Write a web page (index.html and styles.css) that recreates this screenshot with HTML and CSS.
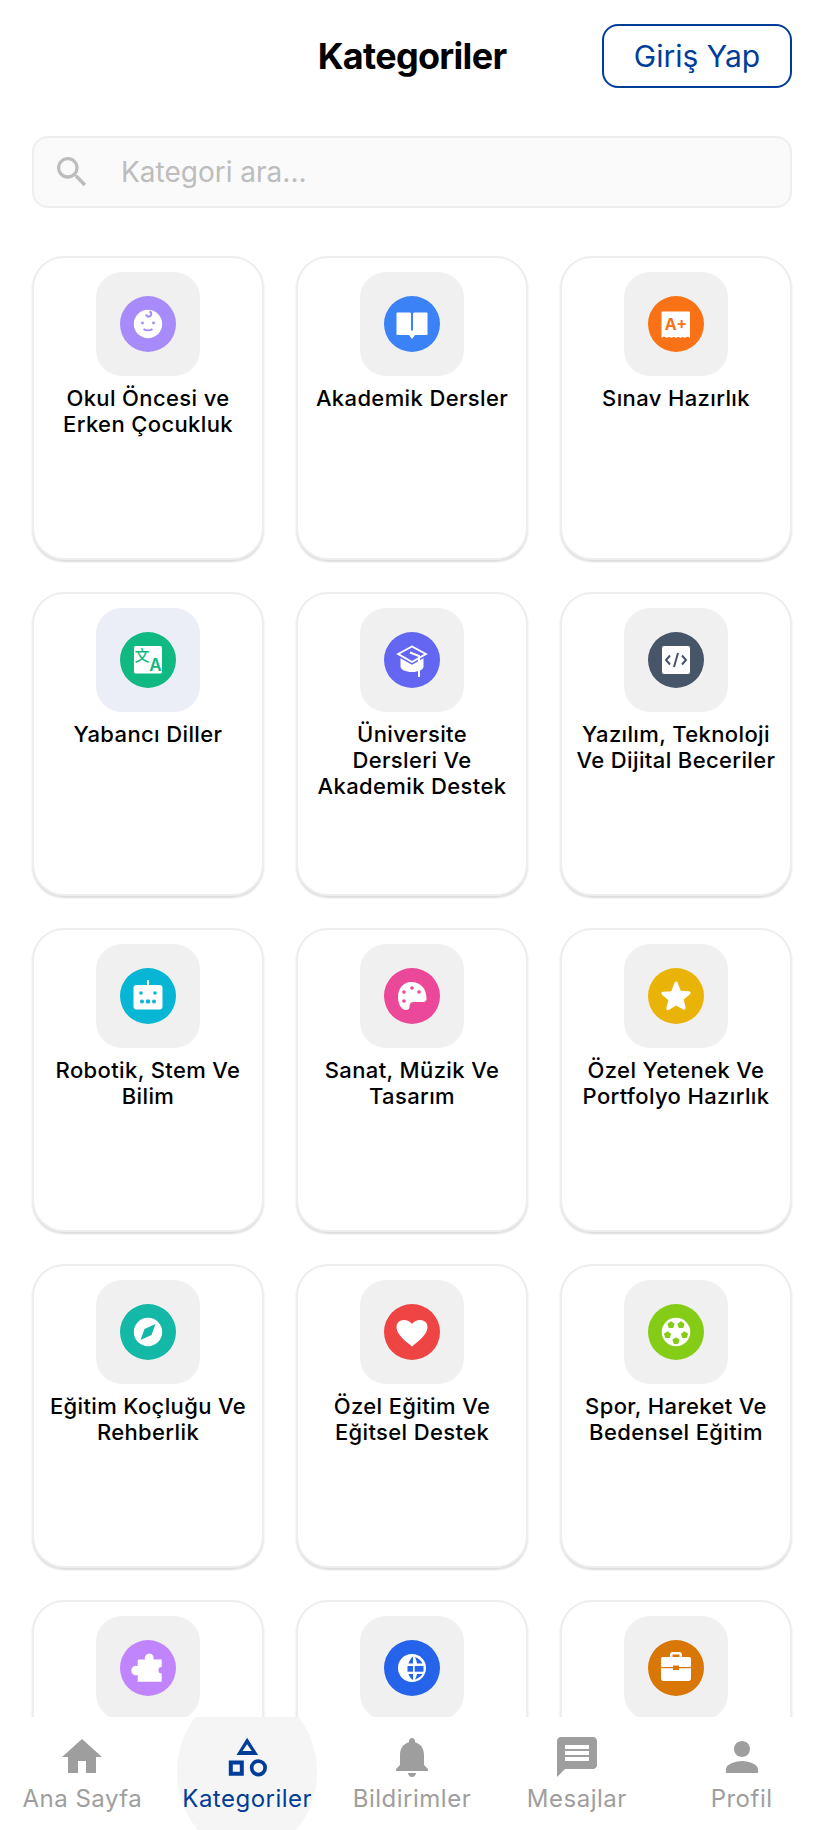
FILE: index.html
```html
<!DOCTYPE html>
<html lang="tr">

<head>
    <meta charset="UTF-8">
    <meta name="viewport" content="width=device-width, initial-scale=1.0">
    <title>Kategoriler</title>
    <link rel="stylesheet" href="styles.css">
</head>

<body>
    <div class="screen">
        <div class="content">
            <div class="header">
                <h1 class="title">Kategoriler</h1>
                <button class="login">Giriş Yap</button>
            </div>

            <div class="search">
                <svg class="search-icon" viewBox="0 0 24 24"><path d="M15.5 14h-.79l-.28-.27A6.47 6.47 0 0 0 16 9.5 6.5 6.5 0 1 0 9.5 16c1.61 0 3.09-.59 4.23-1.57l.27.28v.79l5 4.99L20.49 19l-4.99-5zm-6 0C7.01 14 5 11.99 5 9.5S7.01 5 9.5 5 14 7.01 14 9.5 11.99 14 9.5 14z"/></svg>
                <span class="placeholder">Kategori ara...</span>
            </div>

            <div class="grid">
                <div class="card">
                    <div class="tile"><div class="circle c-violet">
                        <svg viewBox="0 0 32 32"><circle cx="16" cy="16" r="14.200"/><path class="cut-line" d="M17.500 3.500a2.600 2.600 0 1 1-3.400 2.800"/><circle class="cut" cx="10.500" cy="15" r="1.400"/><circle class="cut" cx="21.500" cy="15" r="1.400"/><path class="cut-line" d="M11.500 21c2.500 1.800 6.500 1.800 9 0"/></svg>
                    </div></div>
                    <div class="name">Okul Öncesi ve Erken Çocukluk</div>
                </div>
                <div class="card">
                    <div class="tile"><div class="circle c-blue">
                        <svg viewBox="0 0 32 32"><path d="M1.500 4.500h12c1.200 0 2 .8 2.500 1.500.5-.7 1.300-1.500 2.500-1.500h12c.6 0 1 .4 1 1V26c0 .6-.4 1-1 1H19l-3 4-3-4H1.500c-.6 0-1-.4-1-1V5.500c0-.6.400-1 1-1z"/><rect class="cut" x="15" y="5" width="2" height="17.500"/></svg>
                    </div></div>
                    <div class="name">Akademik Dersler</div>
                </div>
                <div class="card">
                    <div class="tile"><div class="circle c-orange">
                        <svg viewBox="0 0 32 32"><path d="M3 3.500h26c.6 0 1 .4 1 1V30c-2-2-3.500-1.500-5 0-1.500-1.500-3-1.500-4.500 0-1.500-1.500-3.500-1.500-4.500 0-1.500-1.500-3-1.500-4.500 0-1.500-1.500-3.500-1.500-5 0-1.500-1.500-3-2-5 0V4.500c0-.6.4-1 1-1z"/><text class="glyph glyph-ap" x="16" y="21.500">A+</text></svg>
                    </div></div>
                    <div class="name">Sınav Hazırlık</div>
                </div>

                <div class="card">
                    <div class="tile tile-active"><div class="circle c-green">
                        <svg viewBox="0 0 32 32"><rect x="2" y="2" width="28" height="27.500" rx="1.500"/><text class="glyph glyph-tr1" x="10" y="16.500">文</text><text class="glyph glyph-tr2" x="23.500" y="27">A</text></svg>
                    </div></div>
                    <div class="name">Yabancı Diller</div>
                </div>
                <div class="card">
                    <div class="tile"><div class="circle c-indigo">
                        <svg viewBox="0 0 32 32"><path d="M4.500 14v8.500c0 3 5 5.500 11.500 5.500s11.500-2.500 11.500-5.500V14z"/><path class="cap" d="M16 .5-1.500 10 16 20l17.500-10z"/><path class="cut" d="M16 3.500 4 10l12 7 12-7z"/><path class="tassel" d="M14 8.500 23 12v21"/></svg>
                    </div></div>
                    <div class="name">Üniversite<br>Dersleri Ve Akademik Destek</div>
                </div>
                <div class="card">
                    <div class="tile"><div class="circle c-slate">
                        <svg viewBox="0 0 32 32"><rect x="2" y="2" width="28" height="28" rx="2"/><path class="cut-line" d="M10 11.500 6 16l4 4.500M22 11.500l4 4.500-4 4.500M18 9l-4 14"/></svg>
                    </div></div>
                    <div class="name">Yazılım, Teknoloji Ve Dijital Beceriler</div>
                </div>

                <div class="card">
                    <div class="tile"><div class="circle c-cyan">
                        <svg viewBox="0 0 32 32"><rect x="15" y="0" width="2" height="6"/><rect x="1.500" y="5" width="29" height="24.500" rx="3"/><circle class="cut" cx="9" cy="13" r="1.800"/><circle class="cut" cx="23" cy="13" r="1.800"/><rect class="cut" x="8" y="19.500" width="4" height="4" rx="2"/><rect class="cut" x="14" y="19.500" width="4" height="4" rx="1"/><rect class="cut" x="20" y="19.500" width="4" height="4" rx="2"/></svg>
                    </div></div>
                    <div class="name">Robotik, Stem Ve Bilim</div>
                </div>
                <div class="card">
                    <div class="tile"><div class="circle c-pink">
                        <svg viewBox="0 0 32 32"><path d="M15 2C7 2 2 9 2 17c0 7 3.500 13 8 13 2.500 0 3.500-1.500 3.500-3.500 0-3 1.500-4.500 4-4.500h9.500c2.500 0 3.500-1.500 3.500-3.500C30.500 9 25 2 15 2z"/><circle class="cut" cx="16" cy="8" r="1.800"/><circle class="cut" cx="8" cy="12" r="1.800"/><circle class="cut" cx="23" cy="12" r="1.800"/><circle class="cut" cx="8" cy="21" r="1.800"/></svg>
                    </div></div>
                    <div class="name">Sanat, Müzik Ve Tasarım</div>
                </div>
                <div class="card">
                    <div class="tile"><div class="circle c-yellow">
                        <svg viewBox="0 0 32 32"><path d="M16 1.500c1 0 1.500.7 1.900 1.800l2.800 7.500 8 .5c2 .1 2.500 1.900 1.100 3.100l-6.200 5.100 2 7.800c.5 2-1 3-2.700 2L16 25.400l-6.900 4.400c-1.700 1-3.200 0-2.700-2l2-7.800-6.200-5.100C.8 13.700 1.300 11.900 3.300 11.800l8-.5 2.800-7.500c.4-1.100.9-2.300 1.900-2.300z"/></svg>
                    </div></div>
                    <div class="name">Özel Yetenek Ve Portfolyo Hazırlık</div>
                </div>

                <div class="card">
                    <div class="tile"><div class="circle c-teal">
                        <svg viewBox="0 0 32 32"><circle cx="16" cy="16" r="14.200"/><path class="cut" d="M23.500 8 19.500 19 8.500 24l4-11z"/></svg>
                    </div></div>
                    <div class="name">Eğitim Koçluğu Ve Rehberlik</div>
                </div>
                <div class="card">
                    <div class="tile"><div class="circle c-red">
                        <svg viewBox="0 0 32 32"><path d="M16 30.500C6 22.500.5 17 .5 11 .5 7 3.500 4 8 4c3 0 6 1.500 8 4 2-2.500 5-4 8-4 4.500 0 7.500 3 7.500 7 0 6-5.500 11.500-15.500 19.500z"/></svg>
                    </div></div>
                    <div class="name">Özel Eğitim Ve Eğitsel Destek</div>
                </div>
                <div class="card">
                    <div class="tile"><div class="circle c-lime">
                        <svg viewBox="0 0 32 32"><circle cx="16" cy="16" r="14.300"/><path class="cut" d="m11 5.200 3.600 2.600-1.400 4.300H8.800L7.400 7.800zM21 5.200l3.600 2.600-1.400 4.300h-4.400l-1.400-4.300zM7.500 15.200l3.600 2.600-1.400 4.300H5.300l-1.400-4.300zM24.500 15.200l3.600 2.600-1.400 4.300h-4.400l-1.400-4.300zM16 21.200l3.600 2.600-1.400 4.300h-4.400l-1.400-4.300z"/></svg>
                    </div></div>
                    <div class="name">Spor, Hareket Ve Bedensel Eğitim</div>
                </div>

                <div class="card">
                    <div class="tile"><div class="circle c-purple">
                        <svg viewBox="0 0 32 32"><path d="M7 7.500h6a4.500 4.500 0 1 1 8.500 0h8.200V15a3.250 3.250 0 0 0 0 6.500v8.200H5.700V23a4.800 4.800 0 1 1 0-9V8.800c0-.7.600-1.300 1.300-1.300z"/></svg>
                    </div></div>
                </div>
                <div class="card">
                    <div class="tile"><div class="circle c-royal">
                        <svg viewBox="0 0 32 32"><circle cx="16" cy="16" r="14"/><rect class="cut" x="11.500" y="14" width="5.500" height="5.700"/><rect class="cut" x="18.700" y="14" width="8.800" height="5.700"/><path class="cut" d="M17 4.500v7h-4.500c1-3 2.500-5.500 4.500-7zM17 28v-6h-4.500c1 3 2.500 5 4.500 6zM19 5c3 1 6 3.500 7.500 6.500H21C20.500 9 20 7 19 5zM19 27.500c3-1 6-3 7.500-5.500H21c-.5 2-1 3.500-2 5.500z"/></svg>
                    </div></div>
                </div>
                <div class="card">
                    <div class="tile"><div class="circle c-amber">
                        <svg viewBox="0 0 32 32"><path d="M10 5V2.500C10 1 11 0 12.500 0h7C21 0 22 1 22 2.500V5h-2.500V2.500h-7V5z"/><path d="M3 5h26c1.200 0 2 .8 2 2v7c0 .8-.6 1-1.500 1H19v-1.500h-6V15H2.500C1.600 15 1 14.800 1 14V7c0-1.200.8-2 2-2z"/><path d="M1 15.800c.4.200.9.400 1.500.4H13V18h6v-1.800h10.500c.6 0 1.100-.2 1.500-.4V26.500c0 1.500-1 2.500-2.500 2.500h-25C2 29 1 28 1 26.500z"/></svg>
                    </div></div>
                </div>
            </div>
        </div>

        <div class="tabbar">
            <div class="tab">
                <svg class="tab-icon" viewBox="0 0 24 24"><path d="M10 20v-6h4v6h5v-8h3L12 3 2 12h3v8z"/></svg>
                <span class="tab-label">Ana Sayfa</span>
            </div>
            <div class="tab tab-active">
                <div class="tab-pill"></div>
                <svg class="tab-icon" viewBox="0 0 48 48"><path fill-rule="evenodd" d="M24.100 4.700 35.100 22H13.500zm0 6.600-4.600 6.700h9.300z"/><path fill-rule="evenodd" d="M5.800 27.500h15v15.200h-15zm4 4v7.200h7v-7.200z"/><path fill-rule="evenodd" d="M35.400 26.200a8.600 8.600 0 1 1 0 17.200 8.600 8.600 0 0 1 0-17.200zm0 3.700a4.900 4.900 0 1 0 0 9.800 4.900 4.900 0 0 0 0-9.800z"/></svg>
                <span class="tab-label">Kategoriler</span>
            </div>
            <div class="tab">
                <svg class="tab-icon" viewBox="0 0 24 24"><path d="M12 22c1.100 0 2-.9 2-2h-4c0 1.100.9 2 2 2zm6-6v-5c0-3.070-1.640-5.640-4.500-6.320V4c0-.83-.67-1.500-1.500-1.500s-1.500.67-1.500 1.500v.68C7.630 5.360 6 7.920 6 11v5l-2 2v1h16v-1l-2-2z"/></svg>
                <span class="tab-label">Bildirimler</span>
            </div>
            <div class="tab">
                <svg class="tab-icon" viewBox="0 0 24 24"><path d="M20 2H4c-1.100 0-2 .9-2 2v18l4-4h14c1.100 0 2-.9 2-2V4c0-1.100-.9-2-2-2zm-2 12H6v-2h12v2zm0-3H6V9h12v2zm0-3H6V6h12v2z"/></svg>
                <span class="tab-label">Mesajlar</span>
            </div>
            <div class="tab">
                <svg class="tab-icon" viewBox="0 0 24 24"><path d="M12 12c2.210 0 4-1.790 4-4s-1.790-4-4-4-4 1.790-4 4 1.790 4 4 4zm0 2c-2.670 0-8 1.340-8 4v2h16v-2c0-2.660-5.330-4-8-4z"/></svg>
                <span class="tab-label">Profil</span>
            </div>
        </div>
    </div>
</body>

</html>
```
FILE: styles.css
```css
* {
    box-sizing: border-box;
}

body {
    margin: 0;
    background-color: #fff;
    font-family: Inter, "Noto Sans", sans-serif;
}

.screen {
    height: 100vh;
    display: flex;
    flex-direction: column;
    overflow: hidden;
}

.content {
    flex: 1;
    min-height: 0;
    overflow: hidden;
    padding: 24px 32px 0;
}

.header {
    height: 63px;
    display: flex;
    align-items: center;
    justify-content: flex-end;
    position: relative;
}

.title {
    position: absolute;
    left: 0;
    right: 0;
    margin: 0;
    text-align: center;
    font-size: 36px;
    font-weight: 700;
    letter-spacing: -0.7px;
    color: #000;
}

.login {
    width: 190px;
    height: 64px;
    background-color: #fff;
    border: 2px solid #003d99;
    border-radius: 16px;
    color: #003d99;
    font-family: inherit;
    font-size: 30px;
    padding: 0;
}

.search {
    height: 72px;
    margin-top: 49px;
    display: flex;
    align-items: center;
    background-color: #fafafa;
    border: 2px solid #eee;
    border-radius: 16px;
    padding-left: 18px;
}

.search-icon {
    width: 40px;
    height: 40px;
    fill: #bdbdbd;
}

.placeholder {
    margin-left: 29px;
    font-size: 28px;
    color: #bdbdbd;
}

.grid {
    margin-top: 48px;
    display: grid;
    grid-template-columns: repeat(3, 232px);
    gap: 32px;
}

.card {
    height: 304px;
    background-color: #fff;
    border: 2px solid #eee;
    border-radius: 32px;
    box-shadow: 0 2px 2px rgba(0, 0, 0, 0.14);
    padding: 14px 12px 0;
    display: flex;
    flex-direction: column;
    align-items: center;
}

.tile {
    width: 104px;
    height: 104px;
    flex: none;
    background-color: #f0f0f0;
    border-radius: 26px;
    display: flex;
    align-items: center;
    justify-content: center;
}

.tile-active {
    background-color: #ebeef7;
}

.circle {
    width: 56px;
    height: 56px;
    border-radius: 50%;
    display: flex;
    align-items: center;
    justify-content: center;
}

.circle svg {
    width: 32px;
    height: 32px;
    fill: #fff;
    overflow: visible;
}

.name {
    margin-top: 9px;
    font-size: 22px;
    font-weight: 500;
    line-height: 26px;
    letter-spacing: 0.37px;
    text-align: center;
    color: #000;
}

.c-violet { background-color: #a78bfa; --c: #a78bfa; }
.c-blue { background-color: #3b82f6; --c: #3b82f6; }
.c-orange { background-color: #f97316; --c: #f97316; }
.c-green { background-color: #10b981; --c: #10b981; }
.c-indigo { background-color: #6366f1; --c: #6366f1; }
.c-slate { background-color: #475569; --c: #475569; }
.c-cyan { background-color: #06b6d4; --c: #06b6d4; }
.c-pink { background-color: #ec4899; --c: #ec4899; }
.c-yellow { background-color: #eab308; --c: #eab308; }
.c-teal { background-color: #14b8a6; --c: #14b8a6; }
.c-red { background-color: #ef4444; --c: #ef4444; }
.c-lime { background-color: #84cc16; --c: #84cc16; }
.c-purple { background-color: #c084fc; --c: #c084fc; }
.c-royal { background-color: #2563eb; --c: #2563eb; }
.c-amber { background-color: #d97706; --c: #d97706; }

.circle svg .cut {
    fill: var(--c);
}

.circle svg .cut-line {
    fill: none;
    stroke: var(--c);
    stroke-width: 2;
}

.circle svg .cap {
    stroke: var(--c);
    stroke-width: 1.500;
}

.circle svg .tassel {
    fill: none;
    stroke: #fff;
    stroke-width: 2;
}

.glyph {
    fill: var(--c);
    text-anchor: middle;
    font-family: Inter, "Noto Sans CJK SC", sans-serif;
    font-weight: 700;
}

.glyph-ap {
    font-size: 16px;
}

.glyph-tr1 {
    font-family: "Noto Sans CJK SC", sans-serif;
    font-size: 15px;
    font-weight: 500;
}

.glyph-tr2 {
    font-size: 17px;
    font-weight: 600;
}

.tabbar {
    height: 113px;
    flex: none;
    background-color: #fff;
    display: flex;
    overflow: hidden;
}

.tab {
    flex: 1;
    position: relative;
    display: flex;
    flex-direction: column;
    align-items: center;
    padding-top: 16px;
}

.tab-pill {
    position: absolute;
    left: 50%;
    top: -26px;
    width: 140px;
    height: 162px;
    margin-left: -70px;
    border-radius: 50%;
    background-color: #f5f5f5;
}

.tab-icon {
    position: relative;
    width: 48px;
    height: 48px;
    fill: #9e9e9e;
}

.tab-label {
    position: relative;
    margin-top: 3px;
    font-size: 24px;
    letter-spacing: 0.5px;
    color: #9e9e9e;
    white-space: nowrap;
}

.tab-active .tab-icon {
    fill: #003d99;
}

.tab-active .tab-label {
    color: #003d99;
}
```
